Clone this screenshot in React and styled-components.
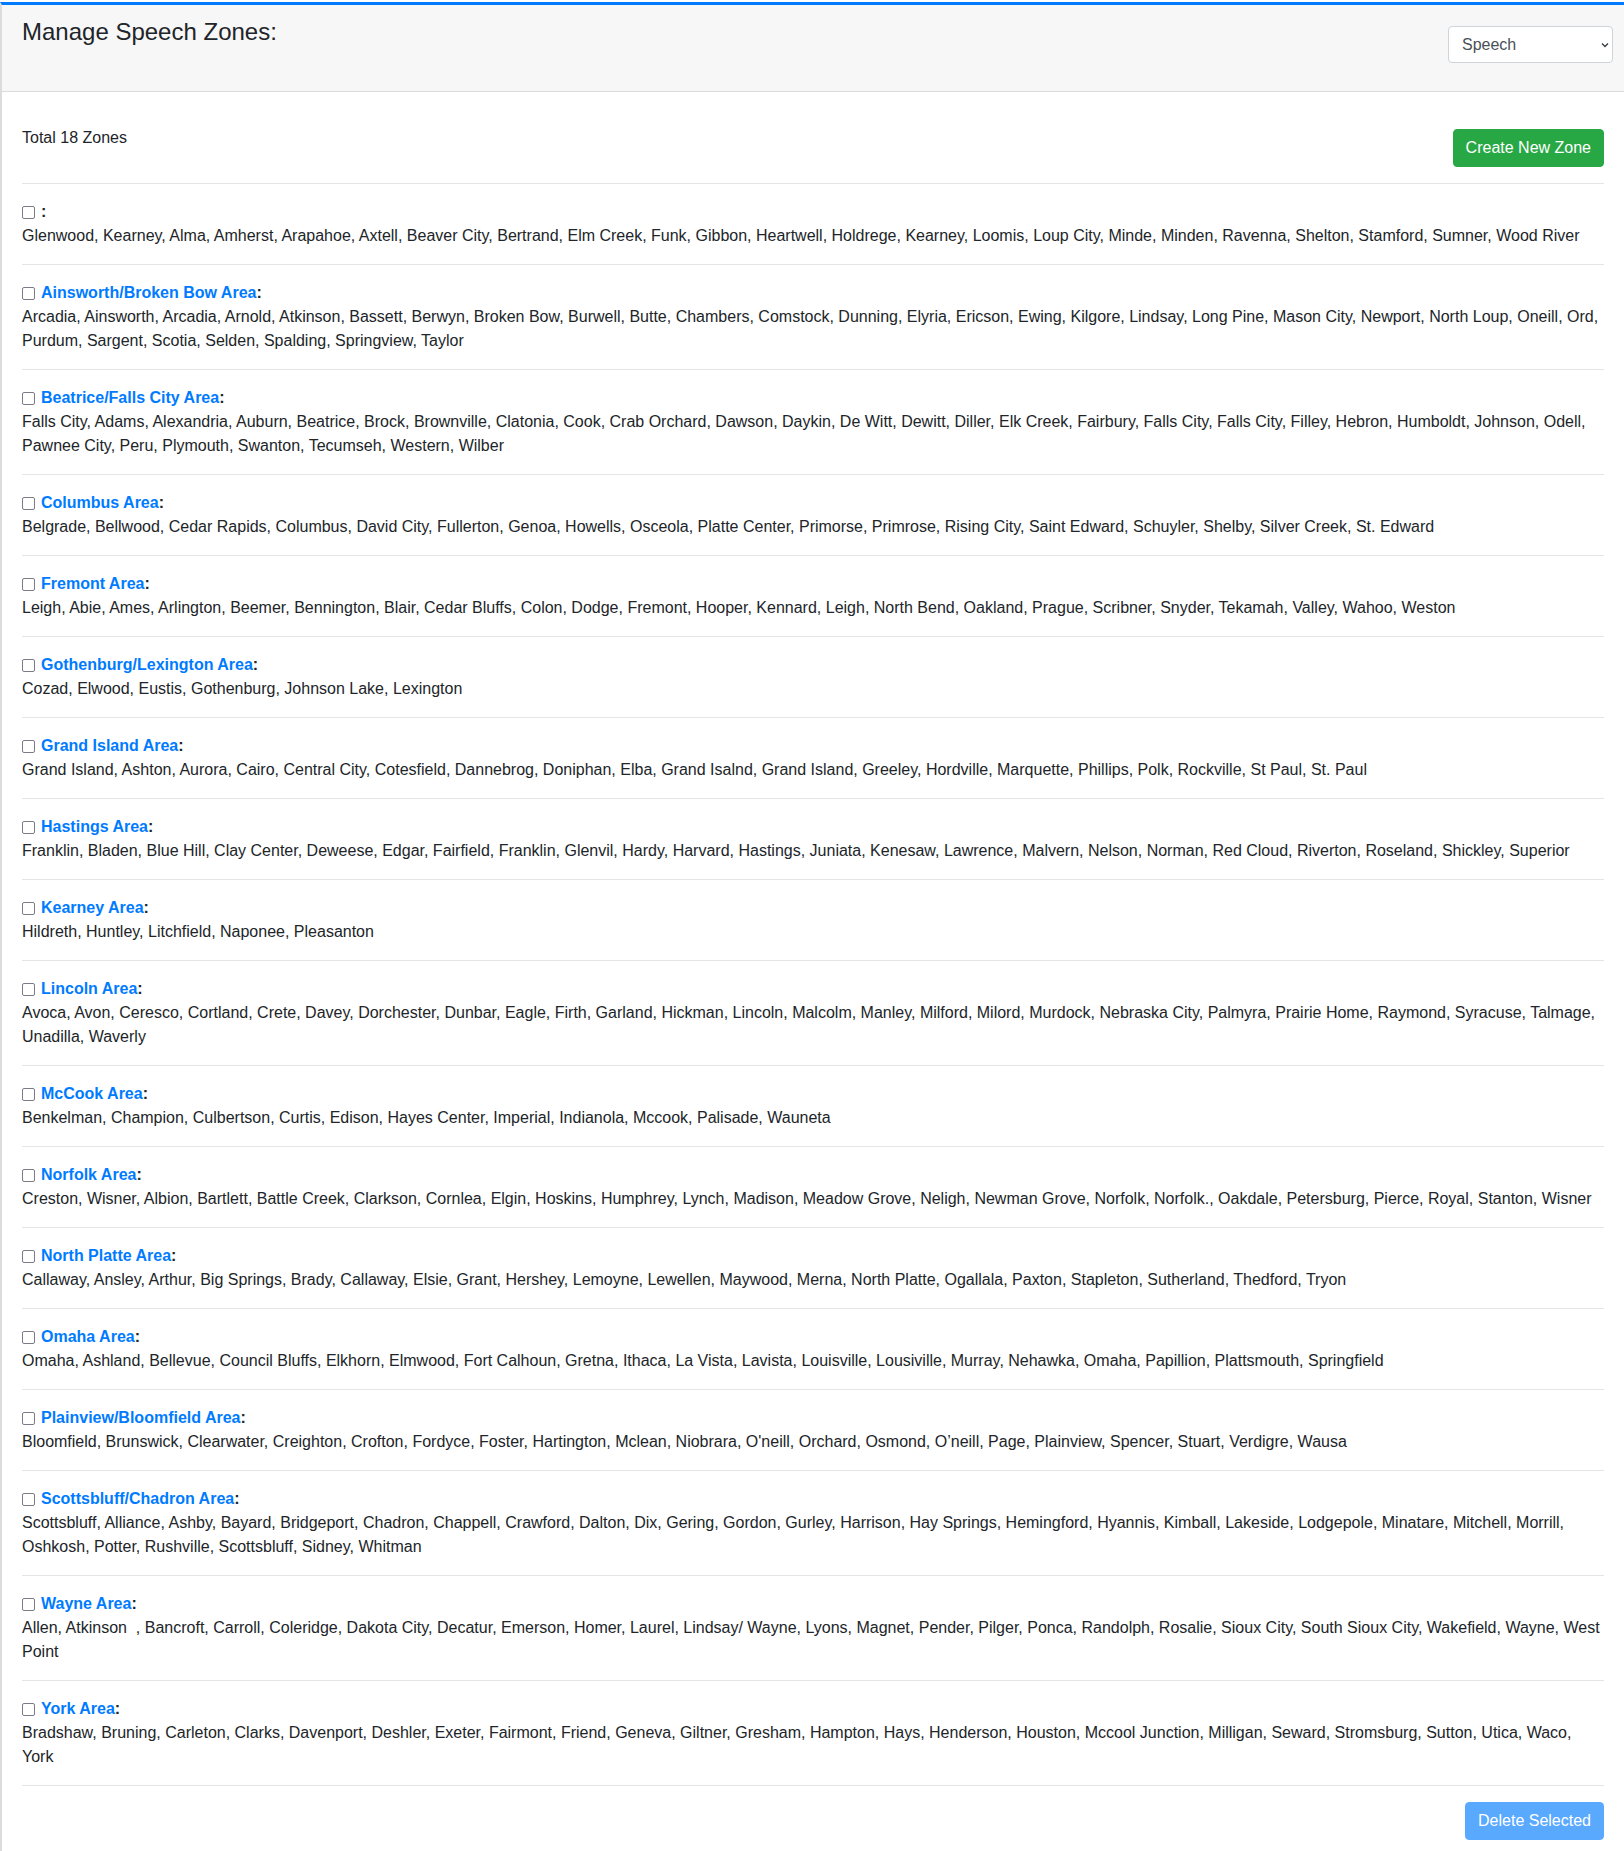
import React from 'react';
import styled, { createGlobalStyle } from 'styled-components';

const GlobalStyle = createGlobalStyle`
  body {
    margin: 0;
    font-family: "Liberation Sans", Arial, sans-serif;
    color: #212529;
    background: #fff;
  }
`;

const zones = [
  { name: '', cities: 'Glenwood, Kearney, Alma, Amherst, Arapahoe, Axtell, Beaver City, Bertrand, Elm Creek, Funk, Gibbon, Heartwell, Holdrege, Kearney, Loomis, Loup City, Minde, Minden, Ravenna, Shelton, Stamford, Sumner, Wood River' },
  { name: 'Ainsworth/Broken Bow Area', cities: 'Arcadia, Ainsworth, Arcadia, Arnold, Atkinson, Bassett, Berwyn, Broken Bow, Burwell, Butte, Chambers, Comstock, Dunning, Elyria, Ericson, Ewing, Kilgore, Lindsay, Long Pine, Mason City, Newport, North Loup, Oneill, Ord, Purdum, Sargent, Scotia, Selden, Spalding, Springview, Taylor' },
  { name: 'Beatrice/Falls City Area', cities: 'Falls City, Adams, Alexandria, Auburn, Beatrice, Brock, Brownville, Clatonia, Cook, Crab Orchard, Dawson, Daykin, De Witt, Dewitt, Diller, Elk Creek, Fairbury, Falls City, Falls City, Filley, Hebron, Humboldt, Johnson, Odell, Pawnee City, Peru, Plymouth, Swanton, Tecumseh, Western, Wilber' },
  { name: 'Columbus Area', cities: 'Belgrade, Bellwood, Cedar Rapids, Columbus, David City, Fullerton, Genoa, Howells, Osceola, Platte Center, Primorse, Primrose, Rising City, Saint Edward, Schuyler, Shelby, Silver Creek, St. Edward' },
  { name: 'Fremont Area', cities: 'Leigh, Abie, Ames, Arlington, Beemer, Bennington, Blair, Cedar Bluffs, Colon, Dodge, Fremont, Hooper, Kennard, Leigh, North Bend, Oakland, Prague, Scribner, Snyder, Tekamah, Valley, Wahoo, Weston' },
  { name: 'Gothenburg/Lexington Area', cities: 'Cozad, Elwood, Eustis, Gothenburg, Johnson Lake, Lexington' },
  { name: 'Grand Island Area', cities: 'Grand Island, Ashton, Aurora, Cairo, Central City, Cotesfield, Dannebrog, Doniphan, Elba, Grand Isalnd, Grand Island, Greeley, Hordville, Marquette, Phillips, Polk, Rockville, St Paul, St. Paul' },
  { name: 'Hastings Area', cities: 'Franklin, Bladen, Blue Hill, Clay Center, Deweese, Edgar, Fairfield, Franklin, Glenvil, Hardy, Harvard, Hastings, Juniata, Kenesaw, Lawrence, Malvern, Nelson, Norman, Red Cloud, Riverton, Roseland, Shickley, Superior' },
  { name: 'Kearney Area', cities: 'Hildreth, Huntley, Litchfield, Naponee, Pleasanton' },
  { name: 'Lincoln Area', cities: 'Avoca, Avon, Ceresco, Cortland, Crete, Davey, Dorchester, Dunbar, Eagle, Firth, Garland, Hickman, Lincoln, Malcolm, Manley, Milford, Milord, Murdock, Nebraska City, Palmyra, Prairie Home, Raymond, Syracuse, Talmage, Unadilla, Waverly' },
  { name: 'McCook Area', cities: 'Benkelman, Champion, Culbertson, Curtis, Edison, Hayes Center, Imperial, Indianola, Mccook, Palisade, Wauneta' },
  { name: 'Norfolk Area', cities: 'Creston, Wisner, Albion, Bartlett, Battle Creek, Clarkson, Cornlea, Elgin, Hoskins, Humphrey, Lynch, Madison, Meadow Grove, Neligh, Newman Grove, Norfolk, Norfolk., Oakdale, Petersburg, Pierce, Royal, Stanton, Wisner' },
  { name: 'North Platte Area', cities: 'Callaway, Ansley, Arthur, Big Springs, Brady, Callaway, Elsie, Grant, Hershey, Lemoyne, Lewellen, Maywood, Merna, North Platte, Ogallala, Paxton, Stapleton, Sutherland, Thedford, Tryon' },
  { name: 'Omaha Area', cities: 'Omaha, Ashland, Bellevue, Council Bluffs, Elkhorn, Elmwood, Fort Calhoun, Gretna, Ithaca, La Vista, Lavista, Louisville, Lousiville, Murray, Nehawka, Omaha, Papillion, Plattsmouth, Springfield' },
  { name: 'Plainview/Bloomfield Area', cities: 'Bloomfield, Brunswick, Clearwater, Creighton, Crofton, Fordyce, Foster, Hartington, Mclean, Niobrara, O\'neill, Orchard, Osmond, O\u2019neill, Page, Plainview, Spencer, Stuart, Verdigre, Wausa' },
  { name: 'Scottsbluff/Chadron Area', cities: 'Scottsbluff, Alliance, Ashby, Bayard, Bridgeport, Chadron, Chappell, Crawford, Dalton, Dix, Gering, Gordon, Gurley, Harrison, Hay Springs, Hemingford, Hyannis, Kimball, Lakeside, Lodgepole, Minatare, Mitchell, Morrill, Oshkosh, Potter, Rushville, Scottsbluff, Sidney, Whitman' },
  { name: 'Wayne Area', cities: 'Allen, Atkinson\u00a0\u00a0, Bancroft, Carroll, Coleridge, Dakota City, Decatur, Emerson, Homer, Laurel, Lindsay/ Wayne, Lyons, Magnet, Pender, Pilger, Ponca, Randolph, Rosalie, Sioux City, South Sioux City, Wakefield, Wayne, West Point' },
  { name: 'York Area', cities: 'Bradshaw, Bruning, Carleton, Clarks, Davenport, Deshler, Exeter, Fairmont, Friend, Geneva, Giltner, Gresham, Hampton, Hays, Henderson, Houston, Mccool Junction, Milligan, Seward, Stromsburg, Sutton, Utica, Waco, York' },
];

const Page = styled.div`
  padding-top: 2px;
`;

const Card = styled.div`
  border-top: 3px solid #007bff;
  border-left: 2px solid #dcdcdc;
  background: #fff;
`;

const Header = styled.div`
  box-sizing: border-box;
  height: 87px;
  display: flex;
  justify-content: space-between;
  align-items: flex-start;
  padding: 12px 11px 0 20px;
  background: #f7f7f7;
  border-bottom: 1px solid #dcdcdc;
`;

const Title = styled.h4`
  margin: 0;
  font-size: 24px;
  font-weight: 400;
  line-height: 29px;
  color: #212529;
`;

const SelectWrap = styled.div`
  position: relative;
  margin-top: 9px;
`;

const Select = styled.select`
  appearance: none;
  box-sizing: border-box;
  width: 165px;
  height: 37px;
  padding: 0 24px 0 13px;
  font-family: "Liberation Sans", Arial, sans-serif;
  font-size: 16px;
  color: #495057;
  background: #fff;
  border: 1px solid #ced4da;
  border-radius: 4px;
`;

const Chevron = styled.svg`
  position: absolute;
  right: 4px;
  top: 16px;
  pointer-events: none;
`;

const Body = styled.div`
  padding: 34px 20px 20px 20px;
`;

const TopRow = styled.div`
  display: flex;
  justify-content: space-between;
  align-items: flex-start;
`;

const Total = styled.div`
  font-size: 16px;
  line-height: 24px;
`;

const Button = styled.button`
  font-family: "Liberation Sans", Arial, sans-serif;
  font-size: 16px;
  line-height: 24px;
  padding: 6px 12px;
  border-radius: 4px;
  border: 1px solid ${p => p.$bg};
  background: ${p => p.$bg};
  color: #fff;
  margin-top: ${p => p.$top || 0}px;
`;

const Divider = styled.hr`
  margin: 16px 0;
  border: 0;
  border-top: 1px solid #e5e5e5;
`;

const Zone = styled.div`
  font-size: 16px;
  line-height: 24px;
`;

const ZoneTitle = styled.div`
  display: flex;
  align-items: center;
  font-weight: 700;
`;

const Check = styled.input`
  appearance: none;
  box-sizing: border-box;
  width: 13px;
  height: 13px;
  margin: 0 6px 0 0;
  border: 1px solid #7d7b88;
  border-radius: 2px;
  background: #fff;
`;

const ZoneLink = styled.a`
  color: #007bff;
  text-decoration: none;
`;

const Cities = styled.div`
  color: #212529;
`;

const Footer = styled.div`
  display: flex;
  justify-content: flex-end;
`;

export default function App() {
  return (
    <Page>
      <GlobalStyle />
      <Card>
        <Header>
          <Title>Manage Speech Zones:</Title>
          <SelectWrap>
            <Select defaultValue="speech">
              <option value="speech">Speech</option>
            </Select>
            <Chevron width="8" height="6" viewBox="0 0 8 6">
              <path d="M1 1.5 L4 4.5 L7 1.5" fill="none" stroke="#343a40" strokeWidth="1.3" />
            </Chevron>
          </SelectWrap>
        </Header>
        <Body>
          <TopRow>
            <Total>Total 18 Zones</Total>
            <Button $bg="#28a745" $top={3}>Create New Zone</Button>
          </TopRow>
          <Divider />
          {zones.map((z, i) => (
            <React.Fragment key={i}>
              <Zone>
                <ZoneTitle>
                  <Check type="checkbox" />
                  <ZoneLink href="#">{z.name}</ZoneLink>:
                </ZoneTitle>
                <Cities>{z.cities}</Cities>
              </Zone>
              <Divider />
            </React.Fragment>
          ))}
          <Footer>
            <Button $bg="#59a9ff">Delete Selected</Button>
          </Footer>
        </Body>
      </Card>
    </Page>
  );
}
